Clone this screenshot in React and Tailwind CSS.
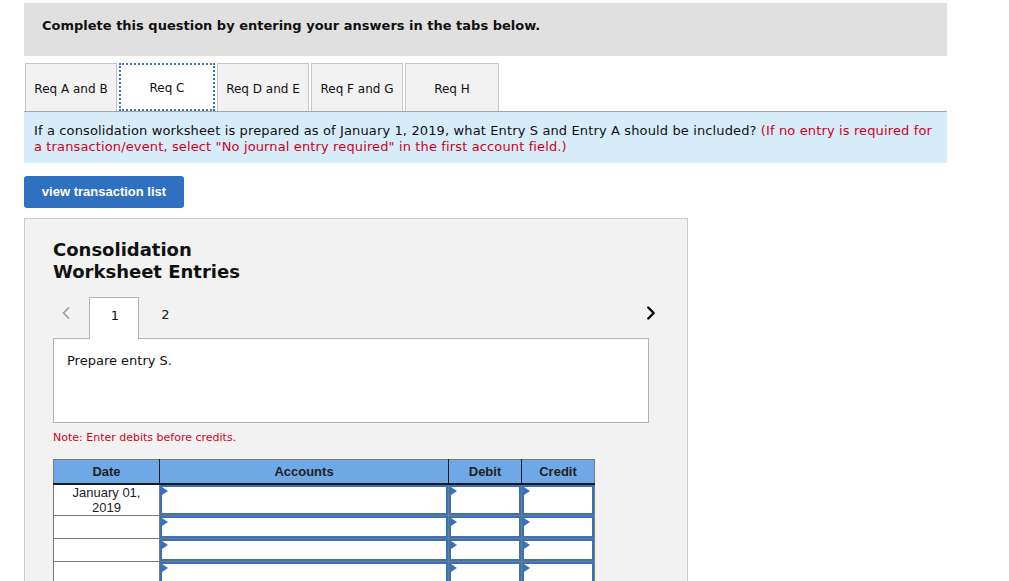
import { ChevronLeft, ChevronRight } from "lucide-react";

const tabs = [
  { label: "Req A and B", w: "w-[92px]" },
  { label: "Req C", w: "w-[96px]", active: true },
  { label: "Req D and E", w: "w-[92px]" },
  { label: "Req F and G", w: "w-[92px]" },
  { label: "Req H", w: "w-[94px]" }
];

const rows = [
  { date: ["January 01,", "2019"], h: "h-[30px]" },
  { date: null, h: "h-[23px]" },
  { date: null, h: "h-[23px]" },
  { date: null, h: "h-[23px]" }
];

const InputCell = ({ className = "" }) => (
  <td className={`border border-[#7a7a7a] p-0 ${className}`}>
    <div className="relative h-full w-full border-2 border-[#3a72b8] bg-white">
      <span className="absolute left-0 top-0 h-0 w-0 border-y-[4px] border-l-[6px] border-y-transparent border-l-[#3a72b8]" />
    </div>
  </td>
);

const App = () => {
  return (
    <div className="min-h-[581px] bg-white pt-[3px] pl-[24px] text-[#111] [font-family:'DejaVu_Sans',Verdana,sans-serif]">
      <div className="w-[923px]">
        <div className="h-[53px] bg-[#e0e0e0] pl-[18px] pt-[15px] text-[13px] font-bold leading-[16px]">
          Complete this question by entering your answers in the tabs below.
        </div>

        <div className="mt-[7px] flex border-b border-[#a3a3a3] pl-[1px]">
          {tabs.map((tab) => (
            <div
              key={tab.label}
              className={`mr-[2px] flex h-[48px] items-center justify-center pt-[2px] text-[12px] ${tab.w} ${
                tab.active
                  ? "border-2 border-dotted border-[#3a72c4] bg-white"
                  : "border border-b-0 border-[#c6c6c6] bg-[#f2f2f2]"
              }`}
            >
              {tab.label}
            </div>
          ))}
        </div>

        <div className="bg-[#d6ecf9] px-[10px] pt-[11px] pb-[8px] text-[13px] leading-[16px] tracking-[0.13px]">
          If a consolidation worksheet is prepared as of January 1, 2019, what Entry S and Entry A should be included?{" "}
          <span className="text-[#d0021b]">
            (If no entry is required for a transaction/event, select "No journal entry required" in the first account field.)
          </span>
        </div>

        <button
          type="button"
          className="mt-[13px] flex h-[32px] w-[160px] items-center justify-center rounded-[3px] bg-[#2f70c0] text-[13px] font-bold text-white [font-family:'Liberation_Sans',Arial,sans-serif]"
        >
          view transaction list
        </button>

        <div className="mt-[10px] h-[400px] w-[664px] border border-[#cbcbcb] bg-[#f2f2f2] pl-[28px] pt-[20px]">
          <div className="text-[18px] font-bold leading-[22px]">
            Consolidation
            <br />
            Worksheet Entries
          </div>

          <div className="mt-[14px] flex h-[41px] w-[596px] items-end">
            <div className="flex h-full w-[36px] items-center text-[#9a9a9a]">
              <ChevronLeft size={20} strokeWidth={2} className="-mt-[10px] ml-[3px]" />
            </div>
            <div className="-mb-px flex h-[42px] w-[50px] items-start justify-center border border-b-0 border-[#b3b3b3] bg-white pl-[2px] pt-[8px] text-[13px]">
              1
            </div>
            <div className="flex h-full w-[50px] items-start justify-center pl-[3px] pt-[8px] text-[13px]">2</div>
            <div className="flex h-full flex-1 items-start justify-end pt-[5px]">
              <ChevronRight size={22} strokeWidth={2.6} className="-mr-[13px] text-black" />
            </div>
          </div>

          <div className="h-[85px] w-[596px] border border-[#b3b3b3] bg-white px-[13px] pt-[12px] text-[13px]">
            Prepare entry S.
          </div>

          <div className="mt-[8px] text-[11px] leading-[14px] text-[#d0021b]">Note: Enter debits before credits.</div>

          <table className="mt-[14px] w-[542px] border-collapse border border-[#7a7a7a] [font-family:'Liberation_Sans',Arial,sans-serif] text-[13px]">
            <thead>
              <tr className="h-[24px] bg-[#6fa8e6] font-bold text-[#222]">
                <th className="w-[106px] border-b-2 border-r border-b-[#1a1a1a] border-r-[#1a1a1a] p-0">Date</th>
                <th className="w-[289px] border-b-2 border-r border-b-[#1a1a1a] border-r-[#1a1a1a] p-0">Accounts</th>
                <th className="w-[73px] border-b-2 border-r border-b-[#1a1a1a] border-r-[#1a1a1a] p-0">Debit</th>
                <th className="w-[73px] border-b-2 border-b-[#1a1a1a] p-0">Credit</th>
              </tr>
            </thead>
            <tbody>
              {rows.map((row, i) => (
                <tr key={i} className={row.h}>
                  <td className="border border-[#7a7a7a] bg-white p-0 text-center align-top text-[13px] leading-[15px] text-[#222]">
                    {row.date && (
                      <>
                        {row.date[0]}
                        <br />
                        {row.date[1]}
                      </>
                    )}
                  </td>
                  <InputCell className={row.h} />
                  <InputCell className={row.h} />
                  <InputCell className={row.h} />
                </tr>
              ))}
            </tbody>
          </table>
        </div>
      </div>
    </div>
  );
};

export default App;
